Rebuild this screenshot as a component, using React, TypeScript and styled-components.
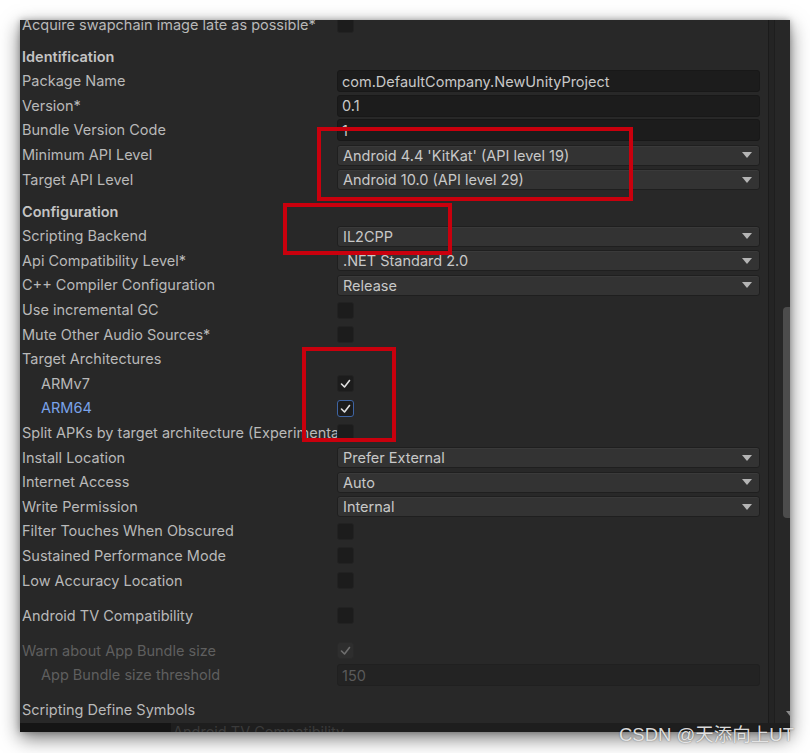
import React from "react";
import styled, { createGlobalStyle } from "styled-components";

const Global = createGlobalStyle`
  html, body { margin: 0; padding: 0; background: #ffffff; }
  body { font-family: "Inter", "Noto Sans", sans-serif; }
  * { box-sizing: border-box; }
`;

const Page = styled.div`
  position: relative;
  width: 810px;
  height: 753px;
  overflow: hidden;
  background: #ffffff;
  padding: 20px 0 0 20px;
`;

const Window = styled.div`
  width: 770px;
  height: 712px;
  background: #282828;
  box-shadow: 0 6px 18px rgba(0, 0, 0, 0.55), 0 0 6px rgba(0, 0, 0, 0.25);
  display: flex;
  flex-direction: column;
  overflow: hidden;
`;

const Body = styled.div`
  height: 703px;
  display: flex;
  flex-direction: row;
`;

const Inspector = styled.div`
  width: 748px;
  overflow: hidden;
  display: flex;
  flex-direction: column;
`;

const Content = styled.div`
  margin-top: -7.6px;
  padding: 0 8px 0 2px;
  display: flex;
  flex-direction: column;
`;

const Divider = styled.div`
  width: 1px;
  background: #1b1b1b;
`;

const Gutter = styled.div`
  width: 6px;
  background: #242424;
  border-right: 1px solid #1e1e1e;
`;

const ScrollTrack = styled.div`
  flex: 1;
  background: #272727;
  display: flex;
  flex-direction: column;
  align-items: flex-end;
  padding-top: 287px;
`;

const ScrollThumb = styled.div`
  width: 7px;
  height: 211px;
  background: #4c4c4c;
  border-radius: 4px 0 0 4px;
`;

const ScrollArrow = styled.div`
  margin-top: auto;
  margin-bottom: 7px;
  width: 0;
  height: 0;
  border-left: 4px solid transparent;
  border-top: 5px solid #8a8a8a;
`;

const BottomStrip = styled.div`
  height: 9px;
  display: flex;
  background: #1e1e1e;
  overflow: hidden;
`;

const StripLeft = styled.div`
  width: 151px;
  background: #151515;
`;

const GhostText = styled.div`
  padding-left: 2px;
  font-size: 14.5px;
  line-height: 15px;
  margin-top: 1px;
  color: #3a3a3a;
  white-space: nowrap;
`;

const Row = styled.div<{ $gap?: number }>`
  height: 24.6px;
  margin-top: ${(p) => p.$gap ?? 0}px;
  display: grid;
  grid-template-columns: 315px 1fr;
  align-items: center;
`;

const Label = styled.div<{ $indent?: boolean; $tone?: "normal" | "blue" | "dim" | "header" }>`
  padding-left: ${(p) => (p.$indent ? 19 : 0)}px;
  font-size: 14.5px;
  font-weight: ${(p) => (p.$tone === "header" ? 600 : 400)};
  color: ${(p) =>
    p.$tone === "blue"
      ? "#7aa3ea"
      : p.$tone === "dim"
      ? "#5f5f5f"
      : p.$tone === "header"
      ? "#c4c4c4"
      : "#b9b9b9"};
  white-space: nowrap;
  overflow: hidden;
  margin-top: -1px;
`;

const TextField = styled.div<{ $dim?: boolean }>`
  height: 22px;
  border-radius: 3px;
  background: ${(p) => (p.$dim ? "#232323" : "#1c1c1c")};
  border: 1px solid ${(p) => (p.$dim ? "#202020" : "#181818")};
  padding-left: 4px;
  display: flex;
  align-items: center;
  font-size: 14.5px;
  color: ${(p) => (p.$dim ? "#5a5a5a" : "#c8c8c8")};
  white-space: nowrap;
  overflow: hidden;
`;

const Dropdown = styled.div`
  height: 21px;
  border-radius: 3px;
  background: #333333;
  border: 1px solid #1f1f1f;
  box-shadow: inset 0 1px 0 #3a3a3a;
  padding: 0 7px 0 5px;
  display: flex;
  align-items: center;
  justify-content: space-between;
  font-size: 14.5px;
  color: #c8c8c8;
  white-space: nowrap;
`;

const Arrow = styled.span`
  width: 0;
  height: 0;
  border-left: 5px solid transparent;
  border-right: 5px solid transparent;
  border-top: 6px solid #b4b4b4;
`;

const Box = styled.div<{ $focus?: boolean; $dim?: boolean }>`
  width: 17px;
  height: 17px;
  border-radius: 3px;
  background: ${(p) => (p.$dim ? "#2e2e2e" : "#1c1c1c")};
  border: 1px solid ${(p) => (p.$focus ? "#3e64a3" : p.$dim ? "#2a2a2a" : "#222222")};
  display: flex;
  align-items: center;
  justify-content: center;
`;

const Mark = styled.svg<{ $dim?: boolean }>`
  width: 15px;
  height: 15px;
  stroke: ${(p) => (p.$dim ? "#6e6e6e" : "#e0e0e0")};
  fill: none;
  stroke-width: 1.6;
  stroke-linecap: round;
  stroke-linejoin: round;
`;

const Annotation = styled.div<{ $x: number; $y: number; $w: number; $h: number }>`
  position: absolute;
  left: ${(p) => p.$x}px;
  top: ${(p) => p.$y}px;
  width: ${(p) => p.$w}px;
  height: ${(p) => p.$h}px;
  border: 4px solid #c9000d;
  pointer-events: none;
`;

const Watermark = styled.div`
  position: absolute;
  left: 619px;
  top: 720px;
  font-family: "Liberation Sans", "Noto Sans CJK SC", sans-serif;
  font-size: 18.5px;
  color: rgba(238, 238, 238, 0.92);
  text-shadow: 0 0 1px rgba(0, 0, 0, 0.35), 0 0 2px rgba(0, 0, 0, 0.2);
  white-space: nowrap;
`;

type Tone = "normal" | "blue" | "dim" | "header";

type Item =
  | { t: "header"; label: string; gap?: number }
  | { t: "label"; label: string; gap?: number; tone?: Tone; indent?: boolean }
  | { t: "text"; label: string; value: string; gap?: number; dim?: boolean; indent?: boolean; tone?: Tone }
  | { t: "drop"; label: string; value: string; gap?: number }
  | {
      t: "check";
      label: string;
      checked?: boolean;
      gap?: number;
      indent?: boolean;
      tone?: Tone;
      focus?: boolean;
      dim?: boolean;
    };

const items: Item[] = [
  { t: "check", label: "Acquire swapchain image late as possible*" },
  { t: "header", label: "Identification", gap: 7.4 },
  { t: "text", label: "Package Name", value: "com.DefaultCompany.NewUnityProject" },
  { t: "text", label: "Version*", value: "0.1" },
  { t: "text", label: "Bundle Version Code", value: "1" },
  { t: "drop", label: "Minimum API Level", value: "Android 4.4 'KitKat' (API level 19)" },
  { t: "drop", label: "Target API Level", value: "Android 10.0 (API level 29)" },
  { t: "header", label: "Configuration", gap: 7.4 },
  { t: "drop", label: "Scripting Backend", value: "IL2CPP" },
  { t: "drop", label: "Api Compatibility Level*", value: ".NET Standard 2.0" },
  { t: "drop", label: "C++ Compiler Configuration", value: "Release" },
  { t: "check", label: "Use incremental GC" },
  { t: "check", label: "Mute Other Audio Sources*" },
  { t: "label", label: "Target Architectures" },
  { t: "check", label: "ARMv7", indent: true, checked: true },
  { t: "check", label: "ARM64", indent: true, checked: true, tone: "blue", focus: true },
  { t: "check", label: "Split APKs by target architecture (Experimental)" },
  { t: "drop", label: "Install Location", value: "Prefer External" },
  { t: "drop", label: "Internet Access", value: "Auto" },
  { t: "drop", label: "Write Permission", value: "Internal" },
  { t: "check", label: "Filter Touches When Obscured" },
  { t: "check", label: "Sustained Performance Mode" },
  { t: "check", label: "Low Accuracy Location" },
  { t: "check", label: "Android TV Compatibility", gap: 10.4 },
  { t: "check", label: "Warn about App Bundle size", gap: 10.4, checked: true, tone: "dim", dim: true },
  { t: "text", label: "App Bundle size threshold", value: "150", indent: true, tone: "dim", dim: true },
  { t: "label", label: "Scripting Define Symbols", gap: 10.4 },
];

const Check = () => <polyline points="3.5,8 6.5,11 11.5,4.5" />;

function renderItem(it: Item, i: number) {
  switch (it.t) {
    case "header":
      return (
        <Row key={i} $gap={it.gap}>
          <Label $tone="header">{it.label}</Label>
        </Row>
      );
    case "label":
      return (
        <Row key={i} $gap={it.gap}>
          <Label $tone={it.tone} $indent={it.indent}>
            {it.label}
          </Label>
        </Row>
      );
    case "text":
      return (
        <Row key={i} $gap={it.gap}>
          <Label $tone={it.tone} $indent={it.indent}>
            {it.label}
          </Label>
          <TextField $dim={it.dim}>{it.value}</TextField>
        </Row>
      );
    case "drop":
      return (
        <Row key={i} $gap={it.gap}>
          <Label>{it.label}</Label>
          <Dropdown>
            <span>{it.value}</span>
            <Arrow />
          </Dropdown>
        </Row>
      );
    case "check":
      return (
        <Row key={i} $gap={it.gap}>
          <Label $tone={it.tone} $indent={it.indent}>
            {it.label}
          </Label>
          <Box $focus={it.focus} $dim={it.dim}>
            {it.checked && (
              <Mark viewBox="0 0 15 15" $dim={it.dim}>
                <Check />
              </Mark>
            )}
          </Box>
        </Row>
      );
  }
}

export default function App() {
  return (
    <Page>
      <Global />
      <Window>
        <Body>
          <Inspector>
            <Content>{items.map(renderItem)}</Content>
          </Inspector>
          <Divider />
          <Gutter />
          <ScrollTrack>
            <ScrollThumb />
            <ScrollArrow />
          </ScrollTrack>
        </Body>
        <BottomStrip>
          <StripLeft />
          <GhostText>Android TV Compatibility</GhostText>
        </BottomStrip>
      </Window>
      <Annotation $x={317} $y={127} $w={316} $h={74} />
      <Annotation $x={283} $y={203} $w={169} $h={52} />
      <Annotation $x={302} $y={347} $w={94} $h={95} />
      <Watermark>CSDN @天添向上UT</Watermark>
    </Page>
  );
}
